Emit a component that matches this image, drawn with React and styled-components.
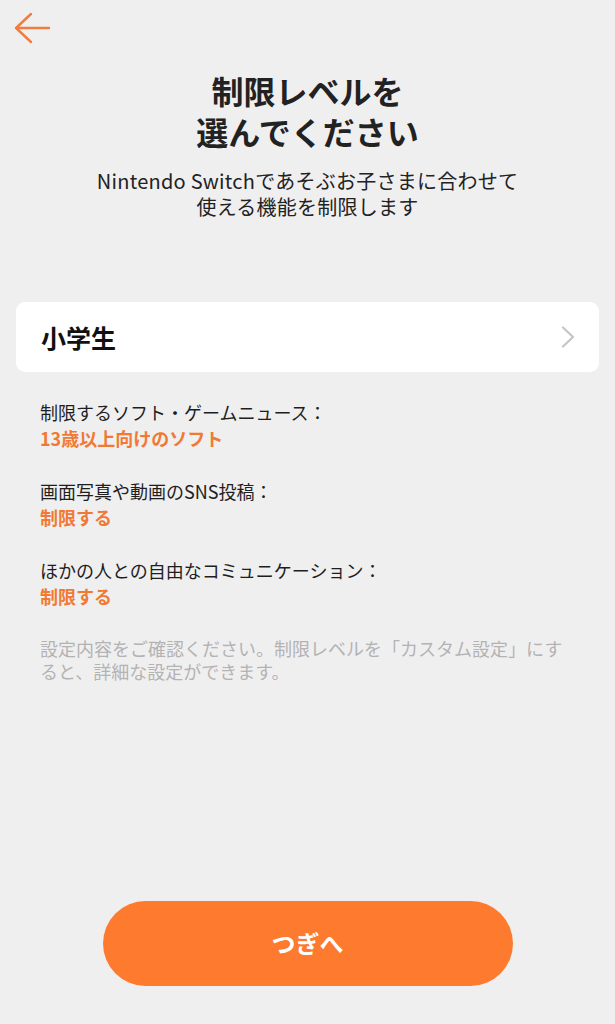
import React from "react";
import styled, { createGlobalStyle } from "styled-components";

const Global = createGlobalStyle`
  html, body { margin: 0; padding: 0; background: #f0eff0; }
  body { font-family: "Noto Sans CJK JP", "Noto Sans", sans-serif; }
`;

const Page = styled.div`
  width: 615px;
  height: 1024px;
  box-sizing: border-box;
  display: flex;
  flex-direction: column;
  background: #f0eff0;
  color: #1c1c1c;
`;

const TopBar = styled.div`
  height: 62px;
  padding: 6px 0 0 10px;
  box-sizing: border-box;
  display: flex;
  align-items: flex-start;
`;

const BackButton = styled.button`
  width: 44px;
  height: 44px;
  padding: 0;
  border: none;
  background: transparent;
  display: flex;
  align-items: center;
  justify-content: center;
`;

const Title = styled.h1`
  margin: 8px 0 0;
  font-size: 32px;
  font-weight: 700;
  text-align: center;
  color: #222;
`;

const TitleLine = styled.span`
  display: block;
  height: 41px;
  line-height: 41px;
`;

const Subtitle = styled.p`
  margin: 16px 0 0;
  font-size: 20px;
  letter-spacing: 0.25px;
  text-align: center;
  color: #222;
`;

const SubLine = styled.span`
  display: block;
  height: 26px;
  line-height: 26px;
`;

const Card = styled.button`
  margin: 82px 16px 0 16px;
  height: 70px;
  border: none;
  border-radius: 9px;
  background: #ffffff;
  display: flex;
  align-items: center;
  justify-content: space-between;
  padding: 0 24px 0 25px;
  font-family: inherit;
`;

const CardLabel = styled.span`
  font-size: 25px;
  font-weight: 700;
  color: #111;
`;

const Items = styled.div`
  margin-top: 27px;
  padding: 0 40px;
  display: flex;
  flex-direction: column;
  gap: 27px;
`;

const Item = styled.div`
  display: flex;
  flex-direction: column;
`;

const ItemLabel = styled.div`
  font-size: 18px;
  line-height: 26px;
  color: #1e1e1e;
`;

const ItemValue = styled.div`
  font-size: 18px;
  line-height: 26px;
  font-weight: 700;
  color: #f07a35;
`;

const Note = styled.p`
  margin: 28px 40px 0;
  font-size: 18px;
  color: #b3b3b3;
`;

const NoteLine = styled.span`
  display: block;
  height: 23px;
  line-height: 23px;
`;

const Footer = styled.div`
  margin-top: auto;
  padding-bottom: 38px;
  display: flex;
  justify-content: center;
`;

const NextButton = styled.button`
  width: 410px;
  height: 85px;
  border: none;
  border-radius: 43px;
  background: #fd7a2e;
  color: #fff;
  font-family: inherit;
  font-size: 24px;
  font-weight: 700;
  padding: 0 0 3px;
`;

const items = [
  { label: "制限するソフト・ゲームニュース：", value: "13歳以上向けのソフト" },
  { label: "画面写真や動画のSNS投稿：", value: "制限する" },
  { label: "ほかの人との自由なコミュニケーション：", value: "制限する" },
];

export default function App() {
  return (
    <Page>
      <Global />
      <TopBar>
        <BackButton aria-label="戻る">
          <svg width="40" height="34" viewBox="0 0 40 34" fill="none">
            <path
              d="M4 17 H37 M4 17 L19 3 M4 17 L19 31"
              stroke="#f07d3f"
              strokeWidth="2.4"
              strokeLinecap="round"
              strokeLinejoin="round"
            />
          </svg>
        </BackButton>
      </TopBar>
      <Title>
        <TitleLine>制限レベルを</TitleLine>
        <TitleLine>選んでください</TitleLine>
      </Title>
      <Subtitle>
        <SubLine>Nintendo Switchであそぶお子さまに合わせて</SubLine>
        <SubLine>使える機能を制限します</SubLine>
      </Subtitle>
      <Card>
        <CardLabel>小学生</CardLabel>
        <svg width="14" height="22" viewBox="0 0 14 22" fill="none">
          <path
            d="M2 1.5 L12 11 L2 20.5"
            stroke="#c5c5c8"
            strokeWidth="2.2"
            strokeLinecap="round"
            strokeLinejoin="round"
          />
        </svg>
      </Card>
      <Items>
        {items.map((it) => (
          <Item key={it.label}>
            <ItemLabel>{it.label}</ItemLabel>
            <ItemValue>{it.value}</ItemValue>
          </Item>
        ))}
      </Items>
      <Note>
        <NoteLine>設定内容をご確認ください。制限レベルを「カスタム設定」にす</NoteLine>
        <NoteLine>ると、詳細な設定ができます。</NoteLine>
      </Note>
      <Footer>
        <NextButton>つぎへ</NextButton>
      </Footer>
    </Page>
  );
}
